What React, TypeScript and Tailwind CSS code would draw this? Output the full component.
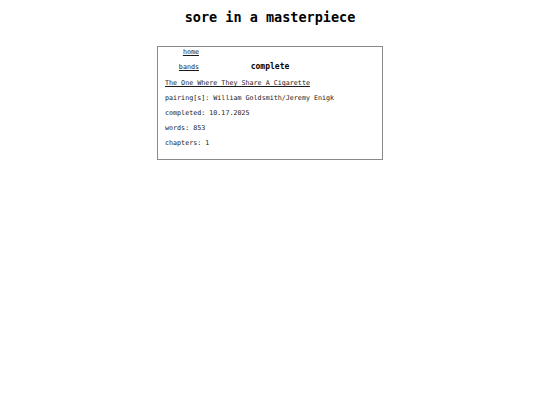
export default function App() {
  return (
    <div className="min-h-screen bg-white text-black antialiased" style={{ fontFamily: '"DejaVu Sans Mono", monospace' }}>
      <h1 className="pt-[8px] text-center text-[13.5px] font-bold leading-[18px]">sore in a masterpiece</h1>
      <div className="mx-auto mt-[20px] w-[226px] border border-[#8a8a8a] px-[7px] pt-[1px] pb-[8px] text-[6.7px] text-[#1a1a1a]">
        <div className="grid h-[8px] grid-cols-[34px_1fr_34px] leading-[8px]">
          <a href="#" className="text-right underline decoration-[0.5px] underline-offset-1">home</a>
        </div>
        <div className="mt-[6px] grid h-[10px] grid-cols-[34px_1fr_34px] leading-[10px]">
          <a href="#" className="text-right underline decoration-[0.5px] underline-offset-1">bands</a>
          <h2 className="text-center text-[8px] font-bold text-black">complete</h2>
        </div>
        <div className="mt-[4px]">
          <p className="h-[15px] leading-[15px]">
            <a href="#" className="underline decoration-[0.5px] underline-offset-1">The One Where They Share A Cigarette</a>
          </p>
          <p className="h-[15px] leading-[15px]">pairing[s]: William Goldsmith/Jeremy Enigk</p>
          <p className="h-[15px] leading-[15px]">completed: 10.17.2025</p>
          <p className="h-[15px] leading-[15px]">words: 853</p>
          <p className="h-[15px] leading-[15px]">chapters: 1</p>
        </div>
      </div>
    </div>
  );
}
